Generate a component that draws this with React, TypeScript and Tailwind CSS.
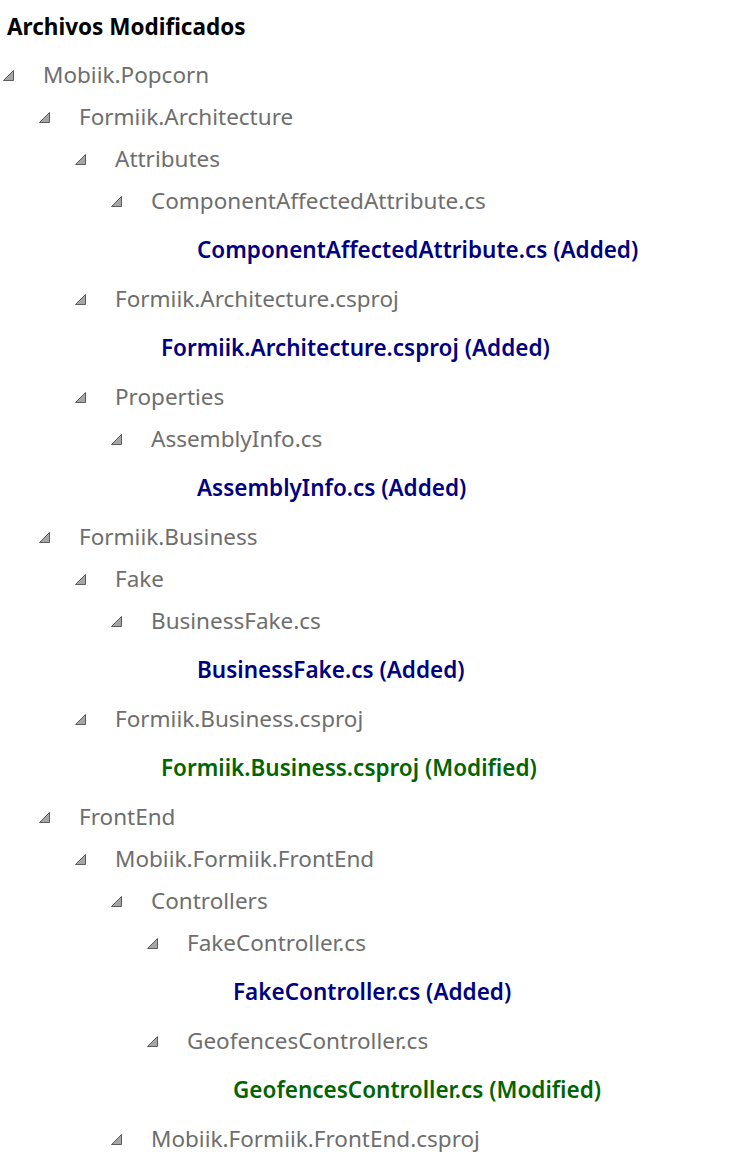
type Node = {
  label: string
  status?: "Added" | "Modified"
  children?: Node[]
}

const tree: Node[] = [
  {
    label: "Mobiik.Popcorn",
    children: [
      {
        label: "Formiik.Architecture",
        children: [
          {
            label: "Attributes",
            children: [{ label: "ComponentAffectedAttribute.cs", children: [{ label: "ComponentAffectedAttribute.cs", status: "Added" }] }],
          },
          { label: "Formiik.Architecture.csproj", children: [{ label: "Formiik.Architecture.csproj", status: "Added" }] },
          {
            label: "Properties",
            children: [{ label: "AssemblyInfo.cs", children: [{ label: "AssemblyInfo.cs", status: "Added" }] }],
          },
        ],
      },
      {
        label: "Formiik.Business",
        children: [
          {
            label: "Fake",
            children: [{ label: "BusinessFake.cs", children: [{ label: "BusinessFake.cs", status: "Added" }] }],
          },
          { label: "Formiik.Business.csproj", children: [{ label: "Formiik.Business.csproj", status: "Modified" }] },
        ],
      },
      {
        label: "FrontEnd",
        children: [
          {
            label: "Mobiik.Formiik.FrontEnd",
            children: [
              {
                label: "Controllers",
                children: [
                  { label: "FakeController.cs", children: [{ label: "FakeController.cs", status: "Added" }] },
                  { label: "GeofencesController.cs", children: [{ label: "GeofencesController.cs", status: "Modified" }] },
                ],
              },
              { label: "Mobiik.Formiik.FrontEnd.csproj", children: [] },
            ],
          },
        ],
      },
    ],
  },
]

function Expander() {
  return (
    <svg width="11" height="11" viewBox="0 0 11 11" className="shrink-0">
      <polygon points="10.5,0.5 10.5,10.5 0.5,10.5" fill="#a6a6a6" stroke="#5c5c5c" strokeWidth="1" />
    </svg>
  )
}

function TreeItem({ node }: { node: Node }) {
  if (node.status) {
    const color = node.status === "Added" ? "text-[#000080]" : "text-[#006400]"
    return (
      <div className={`h-[56px] flex items-center pl-[53px] font-semibold whitespace-nowrap ${color}`}>
        {node.label} ({node.status})
      </div>
    )
  }
  return (
    <div>
      <div className="h-[42px] flex items-center whitespace-nowrap">
        <div className="w-[43px] pl-[3px] flex items-center">
          <Expander />
        </div>
        <span className="text-[#6e6e6e]">{node.label}</span>
      </div>
      {node.children && node.children.length > 0 && (
        <div className="pl-[36px]">
          {node.children.map((c, i) => (
            <TreeItem key={i} node={c} />
          ))}
        </div>
      )}
    </div>
  )
}

export default function App() {
  return (
    <div className="w-[737px] h-[1155px] bg-white overflow-hidden font-['Noto_Sans',sans-serif] text-[22.5px] leading-none">
      <h1 className="pl-[7px] h-[54px] flex items-center font-bold text-black text-[22.5px] whitespace-nowrap">
        Archivos Modificados
      </h1>
      {tree.map((n, i) => (
        <TreeItem key={i} node={n} />
      ))}
    </div>
  )
}
